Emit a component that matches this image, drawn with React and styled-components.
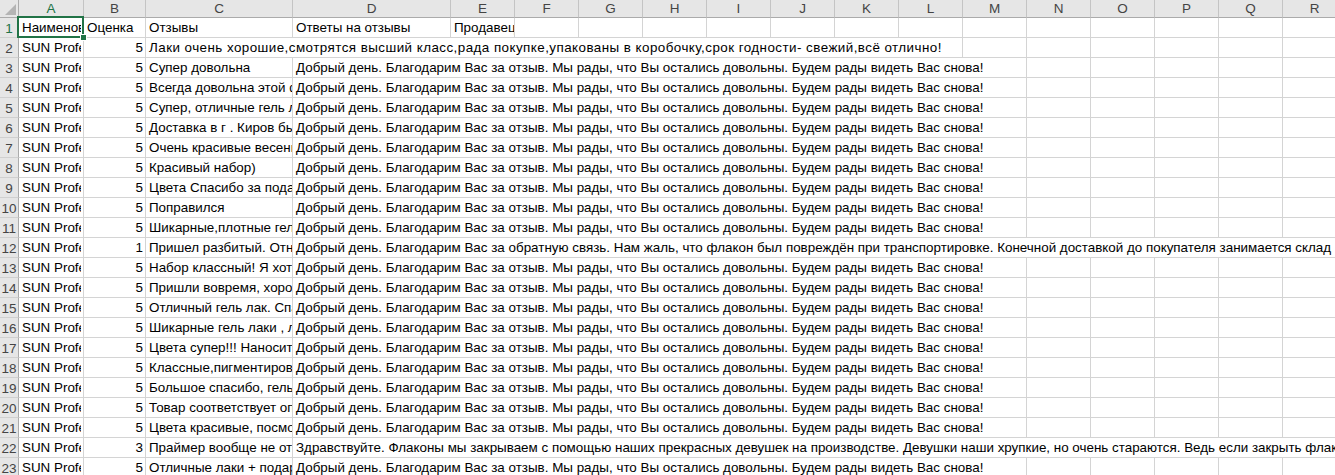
import React from "react";
import styled, { createGlobalStyle } from "styled-components";

const GREEN = "#217346";
const LETTERS = "ABCDEFGHIJKLMNOPQR".split("");
const TOTAL = LETTERS.length;

const THANKS =
  "Добрый день. Благодарим Вас за отзыв. Мы рады, что Вы остались довольны. Будем рады видеть Вас снова!";
const PRODUCT = "SUN Professional набор гель-лаков";

// c/d are text cells; cSpan/dSpan — how many columns the text overflows into
const rows = [
  { a: "Наименование", b: "Оценка", c: "Отзывы", d: "Ответы на отзывы", e: "Продавец", header: true },
  {
    a: PRODUCT,
    b: 5,
    c: "Лаки очень хорошие,смотрятся высший класс,рада покупке,упакованы в коробочку,срок годности- свежий,всё отлично!",
    cSpan: 10,
    wide: true,
  },
  { a: PRODUCT, b: 5, c: "Супер довольна", d: THANKS },
  { a: PRODUCT, b: 5, c: "Всегда довольна этой фирмой", d: THANKS },
  { a: PRODUCT, b: 5, c: "Супер, отличные гель лаки", d: THANKS },
  { a: PRODUCT, b: 5, c: "Доставка в г . Киров быстрая", d: THANKS },
  { a: PRODUCT, b: 5, c: "Очень красивые весенние цвета", d: THANKS },
  { a: PRODUCT, b: 5, c: "Красивый набор)", d: THANKS },
  { a: PRODUCT, b: 5, c: "Цвета Спасибо за подарок", d: THANKS },
  { a: PRODUCT, b: 5, c: "Поправился", d: THANKS },
  { a: PRODUCT, b: 5, c: "Шикарные,плотные гель лаки", d: THANKS },
  {
    a: PRODUCT,
    b: 1,
    c: "Пришел разбитый. Отнесла обратно",
    d: "Добрый день. Благодарим Вас за обратную связь. Нам жаль, что флакон был повреждён при транспортировке. Конечной доставкой до покупателя занимается склад маркетплейса.",
    dSpan: 15,
  },
  { a: PRODUCT, b: 5, c: "Набор классный! Я хотела такой давно", d: THANKS },
  { a: PRODUCT, b: 5, c: "Пришли вовремя, хорошо упакованы", d: THANKS },
  { a: PRODUCT, b: 5, c: "Отличный гель лак. Спасибо", d: THANKS },
  { a: PRODUCT, b: 5, c: "Шикарные гель лаки , ложатся ровно", d: THANKS },
  { a: PRODUCT, b: 5, c: "Цвета супер!!! Наносится легко", d: THANKS },
  { a: PRODUCT, b: 5, c: "Классные,пигментированные", d: THANKS },
  { a: PRODUCT, b: 5, c: "Большое спасибо, гель лаки супер", d: THANKS },
  { a: PRODUCT, b: 5, c: "Товар соответствует описанию", d: THANKS },
  { a: PRODUCT, b: 5, c: "Цвета красивые, посмотрим на носку", d: THANKS },
  {
    a: PRODUCT,
    b: 3,
    c: "Праймер вообще не открывается",
    d: "Здравствуйте. Флаконы мы закрываем с помощью наших прекрасных девушек на производстве. Девушки наши хрупкие, но очень стараются. Ведь если закрыть флакон слабо, он протечёт.",
    dSpan: 15,
  },
  { a: PRODUCT, b: 5, c: "Отличные лаки + подарок", d: THANKS },
];

const GlobalStyle = createGlobalStyle`
  html, body {
    margin: 0;
    padding: 0;
    background: #ffffff;
    overflow: hidden;
  }
  body {
    font-family: "Liberation Sans", Arial, sans-serif;
  }
`;

const Sheet = styled.div`
  display: grid;
  grid-template-columns: 19px 65px 62px 147px 158px repeat(14, 64px);
  grid-template-rows: 18px;
  grid-auto-rows: 20px;
  width: 1335px;
  height: 475px;
  overflow: hidden;
  background: #fff;
`;

const Corner = styled.div`
  position: relative;
  background: #e6e6e6;
  border-right: 1px solid #ababab;
  border-bottom: 1px solid #ababab;
  box-sizing: border-box;

  &::after {
    content: "";
    position: absolute;
    right: 2px;
    bottom: 2px;
    width: 0;
    height: 0;
    border-left: 11px solid transparent;
    border-bottom: 11px solid #b4b4b4;
  }
`;

const ColHeader = styled.div`
  background: #e6e6e6;
  border-right: 1px solid #c4c4c4;
  border-bottom: 1px solid #ababab;
  box-sizing: border-box;
  display: flex;
  align-items: center;
  justify-content: center;
  font-size: 13.5px;
  color: ${({ $active }) => ($active ? GREEN : "#444")};
  line-height: 1;
`;

const RowHeader = styled.div`
  background: #e6e6e6;
  border-right: 1px solid #ababab;
  border-bottom: 1px solid #d0d0d0;
  box-sizing: border-box;
  display: flex;
  align-items: center;
  justify-content: center;
  font-size: 13.5px;
  color: ${({ $active }) => ($active ? GREEN : "#444")};
  padding-top: 1px;
`;

const Cell = styled.div`
  position: relative;
  grid-column: span ${({ $span }) => $span || 1};
  border-right: 1px solid #d4d4d4;
  border-bottom: 1px solid #d4d4d4;
  box-sizing: border-box;
  padding: 0 2px 0 3px;
  font-size: 13.4px;
  letter-spacing: ${({ $wide }) => ($wide ? "0.45px" : "0")};
  line-height: 20px;
  color: #000;
  white-space: nowrap;
  overflow: ${({ $selected }) => ($selected ? "visible" : "hidden")};
  text-align: ${({ $num }) => ($num ? "right" : "left")};
`;

const ClipText = styled.span`
  display: block;
  overflow: hidden;
  white-space: nowrap;
`;

const Selection = styled.div`
  position: absolute;
  top: -2px;
  left: -2px;
  right: -1px;
  bottom: -1px;
  border: 2px solid ${GREEN};
  z-index: 2;
  pointer-events: none;
`;

const FillHandle = styled.div`
  position: absolute;
  right: -5px;
  bottom: -5px;
  width: 5px;
  height: 5px;
  background: ${GREEN};
  border: 1px solid #fff;
`;

function buildCells(row, r) {
  const cells = [];
  cells.push(
    <Cell key="a" $selected={r === 0}>
      <ClipText>{row.a}</ClipText>
      {r === 0 && (
        <Selection>
          <FillHandle />
        </Selection>
      )}
    </Cell>
  );
  cells.push(
    <Cell key="b" $num={!row.header}>
      {row.b}
    </Cell>
  );
  let used = 2;
  const cSpan = row.cSpan || 1;
  cells.push(
    <Cell key="c" $span={cSpan} $wide={row.wide}>
      {row.c}
    </Cell>
  );
  used += cSpan;
  if (used < TOTAL && (row.d || row.header)) {
    const dSpan = row.dSpan || (row.header ? 1 : 10);
    cells.push(
      <Cell key="d" $span={dSpan}>
        {row.d}
      </Cell>
    );
    used += dSpan;
  }
  if (row.e) {
    cells.push(<Cell key="e">{row.e}</Cell>);
    used += 1;
  }
  for (let i = used; i < TOTAL; i++) cells.push(<Cell key={"x" + i} />);
  return cells;
}

export default function App() {
  return (
    <>
      <GlobalStyle />
      <Sheet>
        <Corner />
        {LETTERS.map((l) => (
          <ColHeader key={l} $active={l === "A"}>
            {l}
          </ColHeader>
        ))}
        {rows.map((row, r) => (
          <React.Fragment key={r}>
            <RowHeader $active={r === 0}>{r + 1}</RowHeader>
            {buildCells(row, r)}
          </React.Fragment>
        ))}
      </Sheet>
    </>
  );
}
